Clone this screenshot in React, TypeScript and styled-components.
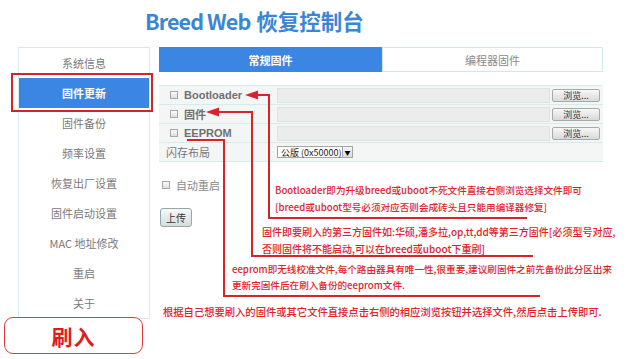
import React from "react";
import styled, { createGlobalStyle } from "styled-components";

const Global = createGlobalStyle`
  html, body { margin: 0; padding: 0; background: #fff; }
  body { font-family: "Liberation Sans", "Noto Sans CJK SC", sans-serif; overflow: hidden; }
  * { box-sizing: border-box; }
`;

const Page = styled.div`
  position: relative;
  width: 640px;
  height: 359px;
  overflow: hidden;
  background: #fff;
`;

const Header = styled.header`
  height: 47px;
  padding: 0 0 6px 145px;
  display: flex;
  align-items: center;
`;

const Title = styled.h1`
  margin: 0;
  font-family: "Noto Sans CJK SC", sans-serif;
  font-size: 21.5px;
  font-weight: 700;
  color: #3a86d6;
  line-height: 1;
`;

const TitleLatin = styled.span`
  letter-spacing: -0.9px;
  margin-right: 1px;
`;

const Body = styled.div`
  display: flex;
  align-items: flex-start;
  padding-left: 18px;
  gap: 9px;
`;

const Sidebar = styled.nav`
  width: 132px;
  border: 1px solid #d4ecef;
  display: flex;
  flex-direction: column;
`;

const NavItem = styled.div<{ $active?: boolean }>`
  position: relative;
  height: 30px;
  display: flex;
  align-items: center;
  justify-content: center;
  font-family: "Noto Sans CJK SC", sans-serif;
  font-size: 11px;
  font-weight: ${(p) => (p.$active ? 700 : 400)};
  color: ${(p) => (p.$active ? "#fff" : "#7a7a7a")};
  background: ${(p) => (p.$active ? "#3a86e2" : "transparent")};
  ${(p) =>
    p.$active &&
    `&::after {
      content: "";
      position: absolute;
      left: -8px; right: -4px; top: -5px; bottom: -4px;
      border: 2px solid #d3242c;
    }`}
`;

const Main = styled.main`
  width: 444px;
  display: flex;
  flex-direction: column;
`;

const Tabs = styled.div`
  display: flex;
  height: 25px;
`;

const Tab = styled.div<{ $active?: boolean }>`
  flex: ${(p) => (p.$active ? "0 0 223px" : "1")};
  display: flex;
  align-items: center;
  justify-content: center;
  font-family: "Noto Sans CJK SC", sans-serif;
  font-size: 11px;
  font-weight: ${(p) => (p.$active ? 700 : 400)};
  color: ${(p) => (p.$active ? "#fff" : "#8a8a8a")};
  background: ${(p) => (p.$active ? "#3a86e2" : "#fff")};
  border: ${(p) => (p.$active ? "none" : "1px solid #cfe9ea")};
`;

const Table = styled.div`
  margin-top: 13px;
  border-top: 1px solid #d4ecec;
  display: flex;
  flex-direction: column;
`;

const Row = styled.div`
  height: 19px;
  display: grid;
  grid-template-columns: 118px 273px 1fr;
  align-items: center;
  background: #f4f6f6;
  border-bottom: 1px solid #d4ecec;
`;

const LabelCell = styled.div<{ $plain?: boolean }>`
  display: flex;
  align-items: center;
  gap: 6px;
  padding-left: ${(p) => (p.$plain ? "7px" : "11px")};
  font-size: 11px;
  font-weight: ${(p) => (p.$plain ? 400 : 700)};
  color: ${(p) => (p.$plain ? "#777" : "#707070")};
  font-family: ${(p) =>
    p.$plain ? `"Noto Sans CJK SC", sans-serif` : `"Liberation Sans", "Noto Sans CJK SC", sans-serif`};
`;

const Check = styled.span`
  display: inline-block;
  width: 8px;
  height: 8px;
  border: 1px solid #a8a8a8;
  background: linear-gradient(#fafafa, #dedede);
`;

const FileInput = styled.div`
  height: 15px;
  background: #ececec;
  border: 1px solid #e0e2e2;
`;

const BrowseBtn = styled.div`
  margin-left: 2px;
  width: 48px;
  height: 13px;
  display: flex;
  align-items: center;
  justify-content: center;
  font-family: "Noto Sans CJK SC", sans-serif;
  font-size: 9px;
  color: #333;
  border: 1px solid #a9a9a9;
  border-radius: 2px;
  background: linear-gradient(#f7f7f7, #d9d9d9);
`;

const Select = styled.div`
  width: 76px;
  height: 12px;
  display: flex;
  align-items: center;
  justify-content: space-between;
  padding-left: 3px;
  border: 1px solid #a5a5a5;
  background: #fff;
  font-family: "Noto Sans CJK SC", sans-serif;
  font-size: 9px;
  color: #222;
`;

const SelectArrow = styled.span`
  width: 10px;
  height: 10px;
  display: flex;
  align-items: center;
  justify-content: center;
  border-left: 1px solid #a5a5a5;
  background: linear-gradient(#f5f5f5, #dcdcdc);
  font-size: 6px;
  color: #000;
`;

const AutoReboot = styled.div`
  margin-top: 16px;
  height: 14px;
  display: flex;
  align-items: center;
  gap: 6px;
  padding-left: 3px;
  font-family: "Noto Sans CJK SC", sans-serif;
  font-size: 11px;
  color: #8a8a8a;
`;

const UploadBtn = styled.div`
  margin-top: 16px;
  margin-left: 1px;
  width: 32px;
  height: 19px;
  display: flex;
  align-items: center;
  justify-content: center;
  font-family: "Noto Sans CJK SC", sans-serif;
  font-size: 10px;
  color: #333;
  border: 1px solid #8fa9ad;
  border-radius: 3px;
  background: linear-gradient(#f8f8f8, #d6dcdc);
`;

const FlashBadge = styled.div`
  position: absolute;
  left: 4px;
  top: 317px;
  width: 139px;
  height: 37px;
  display: flex;
  align-items: center;
  justify-content: center;
  border: 1px solid #e23a3a;
  border-radius: 9px;
  background: #fff;
  font-family: "Noto Sans CJK SC", sans-serif;
  font-size: 21px;
  font-weight: 700;
  color: #e01c1c;
  letter-spacing: 1px;
`;

const Overlay = styled.svg`
  position: absolute;
  left: 0;
  top: 0;
  pointer-events: none;
`;

const Note = styled.div<{ $x: number; $y: number; $lh: number; $size?: number }>`
  position: absolute;
  left: ${(p) => p.$x}px;
  top: ${(p) => p.$y}px;
  font-family: "Noto Sans CJK SC", sans-serif;
  font-size: ${(p) => p.$size ?? 9.6}px;
  font-weight: 500;
  line-height: ${(p) => p.$lh}px;
  color: #e0222b;
  white-space: nowrap;
`;

const navItems = [
  "系统信息",
  "固件更新",
  "固件备份",
  "频率设置",
  "恢复出厂设置",
  "固件启动设置",
  "MAC 地址修改",
  "重启",
  "关于",
];

const fileRows = ["Bootloader", "固件", "EEPROM"];

const RED = "#d9232b";

export default function App() {
  return (
    <Page>
      <Global />
      <Header>
        <Title>
          <TitleLatin>Breed Web</TitleLatin> 恢复控制台
        </Title>
      </Header>
      <Body>
        <Sidebar>
          {navItems.map((n) => (
            <NavItem key={n} $active={n === "固件更新"}>
              {n}
            </NavItem>
          ))}
        </Sidebar>
        <Main>
          <Tabs>
            <Tab $active>常规固件</Tab>
            <Tab>编程器固件</Tab>
          </Tabs>
          <Table>
            {fileRows.map((r) => (
              <Row key={r}>
                <LabelCell>
                  <Check />
                  {r}
                </LabelCell>
                <FileInput />
                <BrowseBtn>浏览...</BrowseBtn>
              </Row>
            ))}
            <Row>
              <LabelCell $plain>闪存布局</LabelCell>
              <Select>
                公版 (0x50000)
                <SelectArrow>▼</SelectArrow>
              </Select>
            </Row>
          </Table>
          <AutoReboot>
            <Check />
            自动重启
          </AutoReboot>
          <UploadBtn>上传</UploadBtn>
        </Main>
      </Body>

      <Overlay width="640" height="359" viewBox="0 0 640 359">
        <g stroke={RED} strokeWidth="2" fill="none">
          <polyline points="256,95 269,95 269,218 527,218" />
          <polyline points="216,112 252,112 252,256 533,256" />
          <polyline points="187,140 224,140 224,296 540,296" />
        </g>
        <g fill={RED}>
          <polygon points="245,95 258,90.5 258,99.5" />
          <polygon points="206,112 219,107.5 219,116.5" />
        </g>
      </Overlay>

      <Note $x={275} $y={182} $lh={17}>
        Bootloader即为升级breed或uboot不死文件直接右侧浏览选择文件即可
        <br />
        [breed或uboot型号必须对应否则会成砖头且只能用编译器修复]
      </Note>
      <Note $x={262} $y={223} $lh={17} $size={10}>
        固件即要刷入的第三方固件如:华硕,潘多拉,op,tt,dd等第三方固件[必须型号对应,
        <br />
        否则固件将不能启动,可以在breed或uboot下重刷]
      </Note>
      <Note $x={232} $y={261} $lh={16}>
        eeprom即无线校准文件,每个路由器具有唯一性,很重要,建议刷固件之前先备份此分区出来
        <br />
        更新完固件后在刷入备份的eeprom文件.
      </Note>
      <Note $x={163} $y={303} $lh={17} $size={10.3}>
        根据自己想要刷入的固件或其它文件直接点击右侧的相应浏览按钮并选择文件,然后点击上传即可.
      </Note>

      <FlashBadge>刷入</FlashBadge>
    </Page>
  );
}
